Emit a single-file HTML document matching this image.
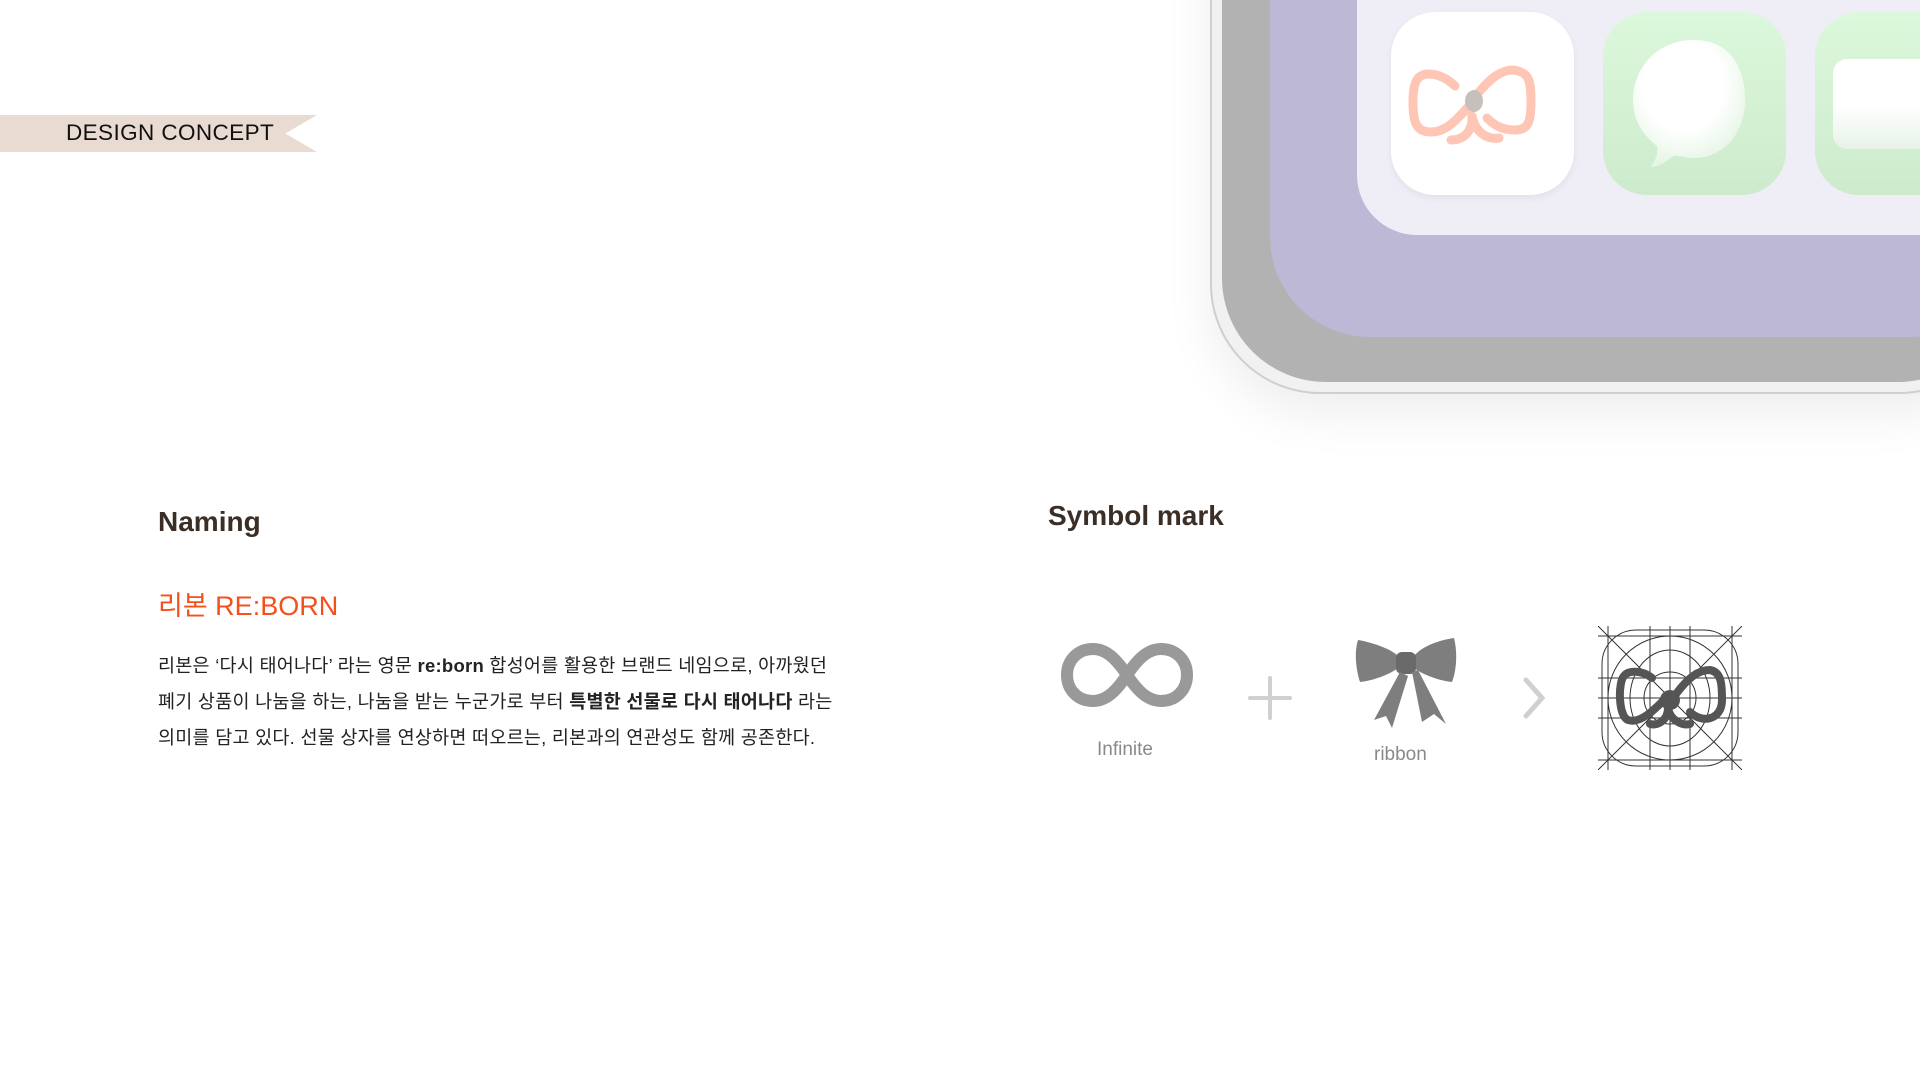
<!DOCTYPE html>
<html><head><meta charset="utf-8"><style>
*{margin:0;padding:0;box-sizing:border-box}
body{width:1920px;height:1080px;background:#fff;position:relative;overflow:hidden;font-family:"Liberation Sans","Noto Sans CJK KR",sans-serif;color:#222}
.abs{position:absolute}
.banner{left:0;top:115px;width:317px;height:37px;background:#e9dbd1;clip-path:polygon(0 0,100% 0,90% 50%,100% 100%,0 100%)}
.banner span{position:absolute;left:66px;top:5px;font-size:22.5px;letter-spacing:0.4px;color:#111}
h2{position:absolute;font-size:28px;font-weight:bold;color:#3a2e26;font-family:"Liberation Sans","Noto Sans CJK KR",sans-serif}
.p{left:158px;top:648px;width:760px;font-size:18.5px;line-height:36px;letter-spacing:0.25px;color:#222;font-family:"Liberation Sans","Noto Sans CJK KR",sans-serif}
.cap{font-size:19px;color:#8a8a8a}
</style></head><body>
<div class="abs banner"><span>DESIGN CONCEPT</span></div>

<div class="abs" style="left:1210px;top:-300px;width:800px;height:694px;border-radius:110px;background:#f1f1f1;border:2px solid #cfcfcf;box-shadow:0 20px 50px rgba(0,0,0,0.07)"></div>
<div class="abs" style="left:1222px;top:-300px;width:780px;height:682px;border-radius:104px;background:#b2b2b2"></div>
<div class="abs" style="left:1270px;top:-300px;width:740px;height:637px;border-radius:100px;background:#bcb8d5"></div>
<div class="abs" style="left:1357px;top:-100px;width:640px;height:335px;border-radius:60px;background:#efeef6"></div>
<div class="abs" style="left:1391px;top:12px;width:183px;height:183px;border-radius:44px;background:#fff;box-shadow:0 3px 8px rgba(0,0,0,0.06)">
<svg width="183" height="183" viewBox="0 0 183 183"><g fill="none" stroke="#ffc5b5" stroke-width="9" stroke-linecap="round">
<path d="M64 74 C56 66 46 62 38 62 C26 62 22 70 22 90 C22 112 26 120 40 120 C54 120 64 110 78 94"/>
<path d="M88 80 C100 66 110 58 122 58 C138 60 140 68 140 90 C140 112 136 118 124 118 C112 118 104 114 96 106"/>
<path d="M81 104 C82 120 72 128 60 128"/><path d="M81 104 C84 120 96 128 108 126"/></g>
<ellipse cx="83" cy="89" rx="9" ry="11" fill="#c5c0bb"/></svg></div>
<div class="abs" style="left:1603px;top:12px;width:183px;height:183px;border-radius:44px;background:linear-gradient(#dcf8dc,#cdebcc)">
<svg class="abs" style="left:0;top:0" width="183" height="183" viewBox="0 0 183 183"><defs><radialGradient id="g" cx="45%" cy="35%" r="65%"><stop offset="55%" stop-color="#fff"/><stop offset="100%" stop-color="#e6f5e6"/></radialGradient></defs>
<path d="M91 28 C127 28 142 55 142 88 C142 122 120 146 91 146 C82 146 76 143 70 144 C62 150 58 154 48 155 C52 148 56 142 54 134 C38 122 30 106 30 88 C30 55 55 28 91 28Z" fill="url(#g)"/></svg></div>
<div class="abs" style="left:1815px;top:12px;width:183px;height:183px;border-radius:44px;background:linear-gradient(#dcf8dc,#cdebcc)">
<div class="abs" style="left:18px;top:47px;width:120px;height:90px;border-radius:14px;background:linear-gradient(#fff 50%,#e8f2e8)"></div></div>

<h2 style="left:158px;top:506px">Naming</h2>
<div class="abs" style="left:158px;top:584px;font-size:27px;color:#f5501c">리본 RE:BORN</div>
<div class="abs p">리본은 ‘다시 태어나다’ 라는 영문 <b>re:born</b> 합성어를 활용한 브랜드 네임으로, 아까웠던<br>폐기 상품이 나눔을 하는, 나눔을 받는 누군가로 부터 <b>특별한 선물로 다시 태어나다</b> 라는<br>의미를 담고 있다. 선물 상자를 연상하면 떠오르는, 리본과의 연관성도 함께 공존한다.</div>

<h2 style="left:1048px;top:500px">Symbol mark</h2>
<svg class="abs" style="left:1060px;top:642px" width="134" height="66" viewBox="0 0 134 66"><path d="M67 33 C55 15 45 7 33 7 C18 7 7 18 7 33 C7 48 18 59 33 59 C45 59 55 51 67 33 C79 15 89 7 101 7 C116 7 127 18 127 33 C127 48 116 59 101 59 C89 59 79 51 67 33Z" fill="none" stroke="#999" stroke-width="12"/></svg>
<div class="abs cap" style="left:1097px;top:739px">Infinite</div>
<svg class="abs" style="left:1248px;top:676px" width="44" height="44"><path d="M22 2V42M2 22H42" stroke="#d0d0d0" stroke-width="4" stroke-linecap="round"/></svg>
<svg class="abs" style="left:1350px;top:634px" width="112" height="100" viewBox="0 0 112 100"><g fill="#7e7e7e"><path d="M48 22 C40 14 20 8 8 6 C4 18 6 36 10 48 C26 46 40 40 48 34Z"/><path d="M64 22 C72 12 90 6 104 4 C108 20 106 38 102 48 C86 46 72 40 64 34Z"/><rect x="46" y="18" width="20" height="22" rx="6" fill="#6a6a6a"/><path d="M50 38 L24 86 L36 82 L42 94 L58 42Z"/><path d="M62 38 L72 88 L84 80 L96 90 L68 36Z"/></g></svg>
<div class="abs cap" style="left:1374px;top:744px">ribbon</div>
<svg class="abs" style="left:1520px;top:676px" width="28" height="44"><path d="M6 4L22 22L6 40" fill="none" stroke="#d0d0d0" stroke-width="5" stroke-linecap="round"/></svg>
<svg class="abs" style="left:1598px;top:626px" width="144" height="144" viewBox="0 0 144 144"><g fill="none" stroke="#333" stroke-width="1"><rect x="4" y="4" width="136" height="136" rx="34"/><path d="M0 0L144 144M144 0L0 144M0 10H144M0 134H144M10 0V144M134 0V144M0 52H144M0 72H144M0 92H144M52 0V144M72 0V144M92 0V144"/><ellipse cx="72" cy="72" rx="62" ry="62"/><ellipse cx="72" cy="72" rx="40" ry="48"/><circle cx="72" cy="72" r="26"/></g>
<g fill="none" stroke="#555" stroke-width="8" stroke-linecap="round"><path d="M54 52 C44 44 30 44 26 50 C20 56 20 90 30 94 C42 98 56 84 66 74"/><path d="M78 68 C90 52 100 44 112 44 C124 46 124 60 124 74 C124 94 104 98 92 86"/><path d="M70 82 C70 94 60 100 52 98M70 82 C72 94 84 100 92 98"/></g><circle cx="72" cy="74" r="10" fill="#555"/></svg>
</body></html>
